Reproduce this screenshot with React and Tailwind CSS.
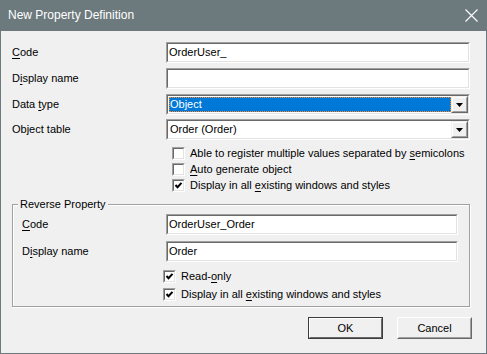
import React from 'react';

const Acc = ({ children }) => <span className="underline underline-offset-2">{children}</span>;

const Sunken = ({ className = '', children }) => (
    <div className={`flex border border-t-[#a0a0a0] border-l-[#a0a0a0] border-b-white border-r-white ${className}`}>
        <div className="flex flex-1 min-w-0 items-center border border-t-[#696969] border-l-[#696969] border-b-[#e3e3e3] border-r-[#e3e3e3] bg-white">
            {children}
        </div>
    </div>
);

const TextBox = ({ value, width }) => (
    <Sunken className={`h-[21px] ${width}`}>
        <span className="pl-[1px] text-black whitespace-pre">{value}</span>
    </Sunken>
);

const DropButton = () => (
    <div className="flex h-full w-[17px] border border-t-[#f0f0f0] border-l-[#f0f0f0] border-b-[#696969] border-r-[#696969]">
        <div className="flex flex-1 items-center justify-center bg-[#f0f0f0] border border-t-white border-l-white border-b-[#a0a0a0] border-r-[#a0a0a0]">
            <svg width="7" height="4" viewBox="0 0 7 4">
                <polygon points="0,0 7,0 3.5,4" fill="#000" />
            </svg>
        </div>
    </div>
);

const Select = ({ value, selected }) => (
    <Sunken className="h-[21px] w-[304px]">
        <div className="flex flex-1 h-full items-center min-w-0 py-[1px] pl-[1px]">
            {selected ? (
                <span className="flex items-center flex-1 h-full bg-[#0078d7] text-white border border-dotted border-[#ff8728]">
                    {value}
                </span>
            ) : (
                <span className="pl-[1px]">{value}</span>
            )}
        </div>
        <DropButton />
    </Sunken>
);

const Check = ({ checked, children }) => (
    <div className="flex items-center gap-[5px] h-[13px] leading-[13px]">
        <Sunken className="w-[13px] h-[13px] shrink-0">
            {checked && (
                <svg width="9" height="9" viewBox="0 0 9 9" className="block">
                    <path d="M1.5 4 L3.5 6.2 L7.5 1.8" stroke="#000" strokeWidth="2" fill="none" />
                </svg>
            )}
        </Sunken>
        <span className="whitespace-nowrap">{children}</span>
    </div>
);

const Row = ({ label, labelWidth, children, className = '' }) => (
    <div className={`flex items-center h-[21px] ${className}`}>
        <div className={labelWidth}>{label}</div>
        {children}
    </div>
);

const Button = ({ children, isDefault }) => (
    <div className={`flex w-[75px] h-[22px] border ${isDefault ? 'border-[#3c3c3c]' : 'border-t-white border-l-white border-b-[#696969] border-r-[#696969]'}`}>
        <div className={`flex flex-1 items-center justify-center bg-[#f0f0f0] border ${isDefault ? 'border-t-white border-l-white border-b-[#696969] border-r-[#696969]' : 'border-t-[#f0f0f0] border-l-[#f0f0f0] border-b-[#a0a0a0] border-r-[#a0a0a0]'}`}>
            {children}
        </div>
    </div>
);

export default function App() {
    return (
        <div className="w-[487px] h-[354px] flex flex-col bg-[#f0f0f0] border-x border-b border-[#6c7a7d] text-[11px] leading-[15px] text-black font-['Liberation_Sans',Arial,sans-serif] overflow-hidden">
            {/* Title bar */}
            <div className="h-[31px] shrink-0 bg-[#6c7a7d] flex items-center justify-between pl-[8px] pr-[9px] -mx-px">
                <span className="text-white text-[12px]">New Property Definition</span>
                <svg width="13" height="13" viewBox="0 0 13 13">
                    <path d="M0.5 0.5 L12.5 12.5 M12.5 0.5 L0.5 12.5" stroke="#fff" strokeWidth="1.1" />
                </svg>
            </div>

            <div className="flex flex-col pl-[11px]">
                {/* Main fields */}
                <div className="flex flex-col mt-[11px]">
                    <Row label={<><Acc>C</Acc>ode</>} labelWidth="w-[154px]">
                        <TextBox value="OrderUser_" width="w-[304px]" />
                    </Row>
                    <Row label={<>D<Acc>i</Acc>splay name</>} labelWidth="w-[154px]" className="mt-[5px]">
                        <TextBox value="" width="w-[304px]" />
                    </Row>
                    <Row label={<>Data <Acc>t</Acc>ype</>} labelWidth="w-[154px]" className="mt-[5px]">
                        <Select value="Object" selected />
                    </Row>
                    <Row label="Object table" labelWidth="w-[154px]" className="mt-[4px]">
                        <Select value="Order (Order)" />
                    </Row>
                </div>

                <div className="flex flex-col gap-[3px] ml-[160px] mt-[7px]">
                    <Check>Able to register multiple values separated by <Acc>s</Acc>emicolons</Check>
                    <Check><Acc>A</Acc>uto generate object</Check>
                    <Check checked>Display in all <Acc>e</Acc>xisting windows and styles</Check>
                </div>

                {/* Reverse property group */}
                <fieldset className="w-[458px] h-[110px] mt-[5px] border border-[#a0a0a0] shadow-[inset_1px_1px_0_#fff,1px_1px_0_#fff]">
                    <legend className="ml-[5px] px-[2px] bg-[#f0f0f0]">Reverse Property</legend>
                    <div className="flex flex-col pl-[9px]">
                        <div className="flex flex-col mt-[2px]">
                            <Row label={<><Acc>C</Acc>ode</>} labelWidth="w-[144px]">
                                <TextBox value="OrderUser_Order" width="w-[292px]" />
                            </Row>
                            <Row label={<>D<Acc>i</Acc>splay name</>} labelWidth="w-[144px]" className="mt-[6px]">
                                <TextBox value="Order" width="w-[292px]" />
                            </Row>
                        </div>
                        <div className="flex flex-col gap-[5px] ml-[141px] mt-[8px]">
                            <Check checked>Read-<Acc>o</Acc>nly</Check>
                            <Check checked>Display in all <Acc>e</Acc>xisting windows and styles</Check>
                        </div>
                    </div>
                </fieldset>

                {/* Buttons */}
                <div className="flex justify-end gap-[14px] mt-[10px] pr-[14px]">
                    <Button isDefault>OK</Button>
                    <Button>Cancel</Button>
                </div>
            </div>
        </div>
    );
}
